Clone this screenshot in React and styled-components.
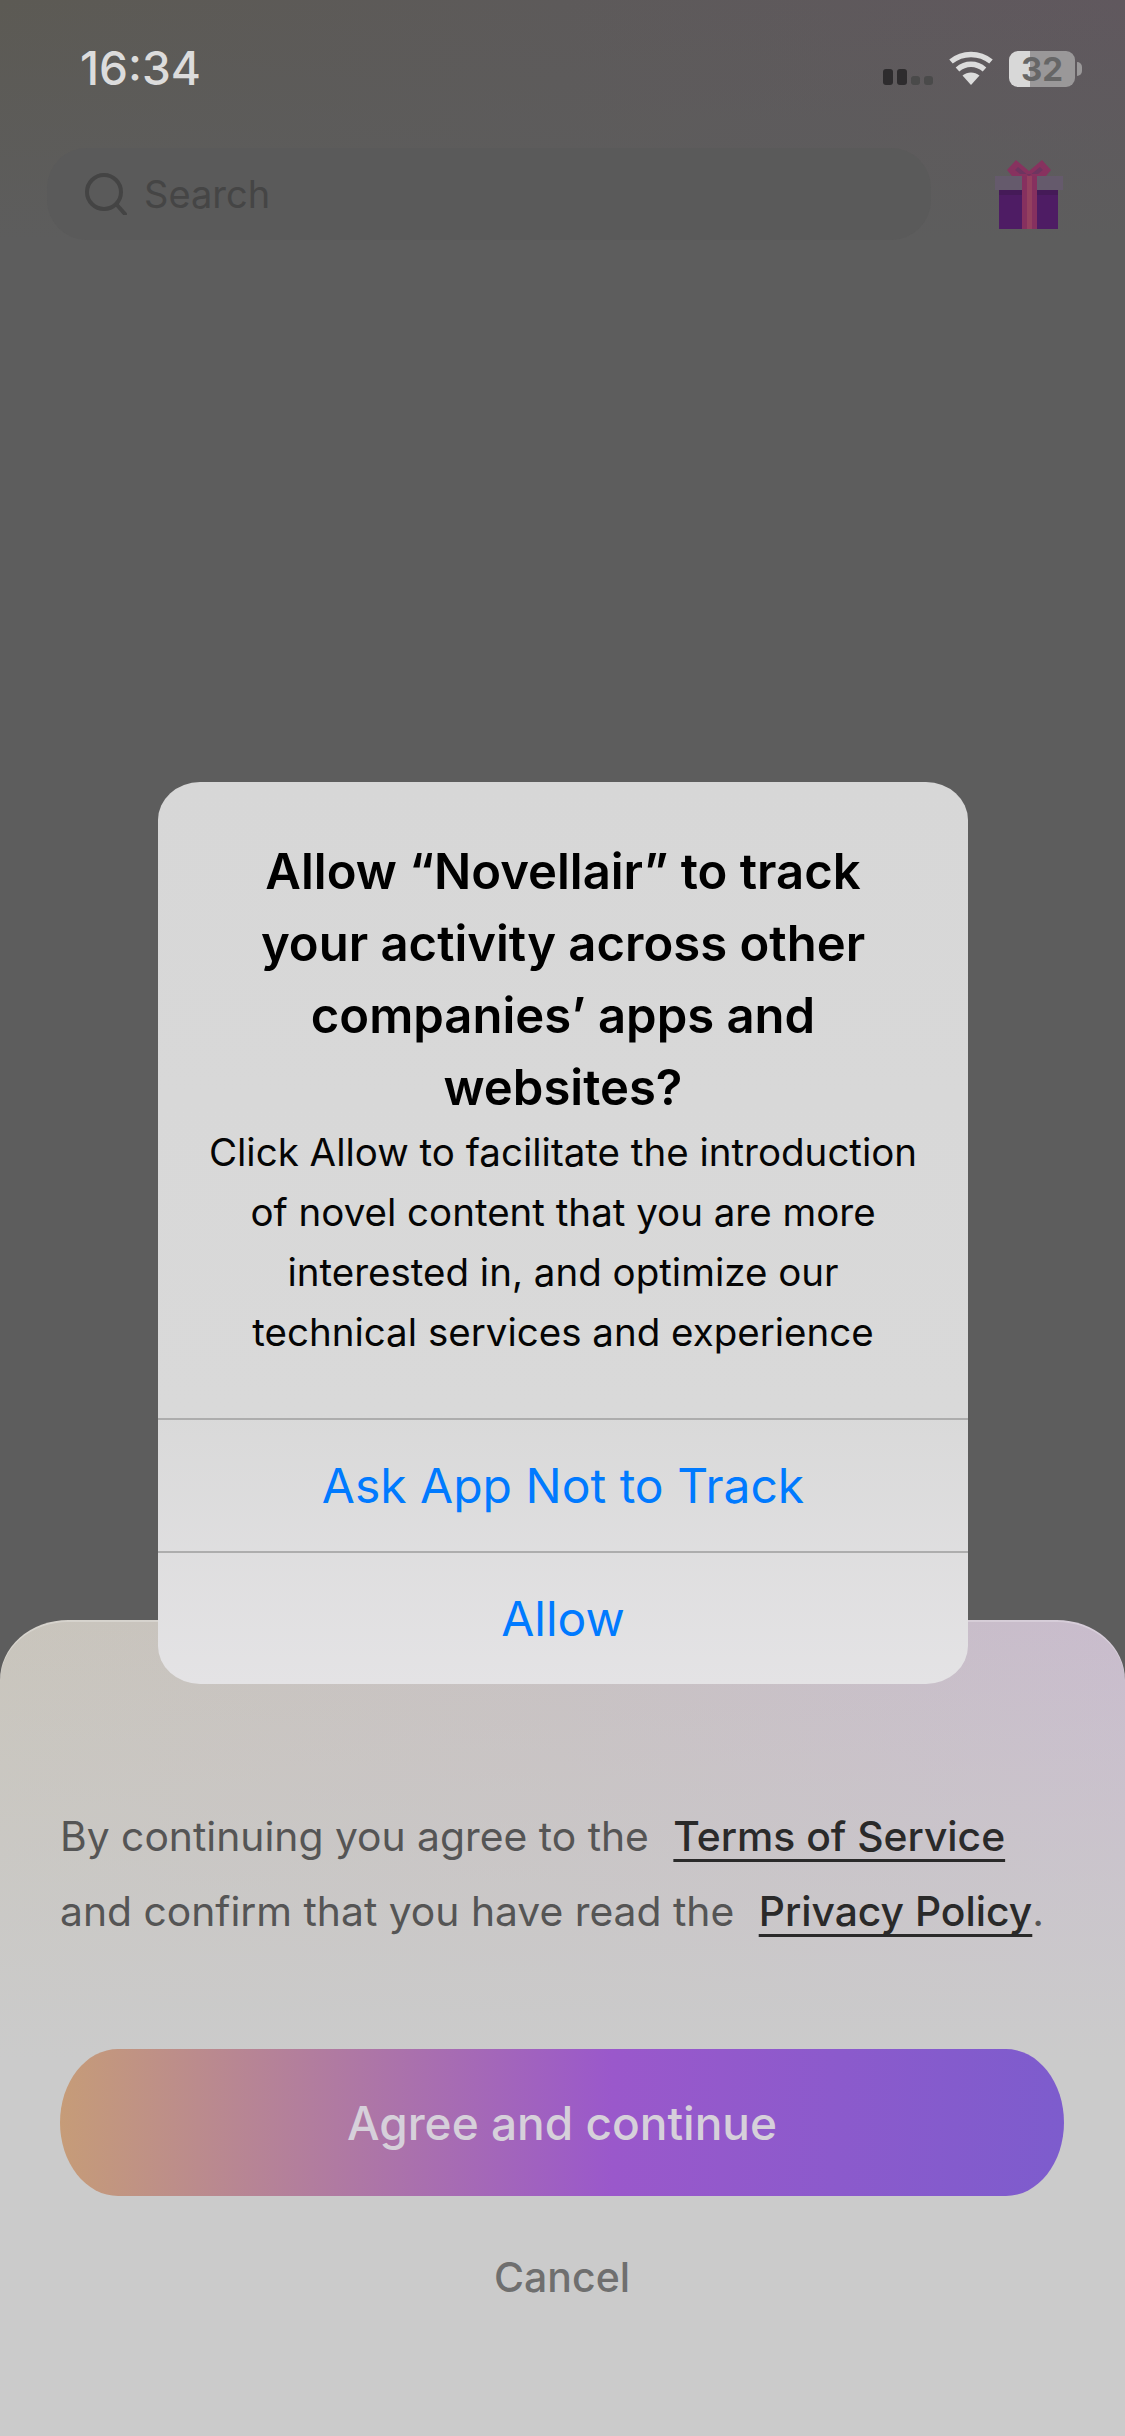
import styled, { createGlobalStyle } from "styled-components";

const GlobalStyle = createGlobalStyle`
  html, body {
    margin: 0;
    padding: 0;
    background: #5d5d5d;
  }
  * {
    box-sizing: border-box;
  }
`;

const Page = styled.div`
  position: relative;
  width: 1125px;
  height: 2436px;
  display: flex;
  flex-direction: column;
  overflow: hidden;
  font-family: Inter, "Liberation Sans", sans-serif;
  background: linear-gradient(180deg, transparent 0, #5d5d5d 240px),
    linear-gradient(90deg, #5c5a54 0%, #5d5a5a 50%, #60585e 100%);
  background-color: #5d5d5d;
`;

const StatusBar = styled.div`
  height: 148px;
  padding: 42px 43px 0 80px;
  display: flex;
  justify-content: space-between;
  align-items: flex-start;
`;

const Time = styled.div`
  font-size: 46px;
  line-height: 52px;
  font-weight: 500;
  color: #dcdcdc;
`;

const StatusIcons = styled.div`
  display: flex;
  align-items: flex-start;
  padding-top: 9px;
  padding-right: 7px;
`;

const Signal = styled.div`
  display: flex;
  align-items: flex-end;
  gap: 4px;
  height: 34px;
  margin-right: 15px;
`;

const SignalBar = styled.span`
  width: ${(p) => (p.$on ? 10 : 9)}px;
  height: ${(p) => (p.$on ? 16 : 9)}px;
  border-radius: 3px;
  background: ${(p) => (p.$on ? "#2e2c2e" : "#4a4a4a")};
`;

const WifiIcon = styled.svg`
  width: 46px;
  height: 34px;
  margin-right: 15px;
`;

const Battery = styled.div`
  position: relative;
  width: 66px;
  height: 36px;
  border-radius: 9px;
  background: linear-gradient(90deg, #d8d8d8 0 21px, #9a9899 21px);
  color: #666;
  font-size: 33px;
  line-height: 36px;
  font-weight: 700;
  text-align: center;

  &::after {
    content: "";
    position: absolute;
    right: -7px;
    top: 11px;
    width: 5px;
    height: 14px;
    border-radius: 0 5px 5px 0;
    background: #9a9899;
  }
`;

const SearchRow = styled.div`
  padding: 0 62px 0 47px;
  display: flex;
  align-items: center;
  justify-content: space-between;
`;

const SearchField = styled.div`
  width: 884px;
  height: 92px;
  padding-left: 38px;
  border-radius: 40px;
  background: #5a5a5a;
  display: flex;
  align-items: center;
  gap: 17px;
  font-size: 38px;
  color: #454545;
`;

const Sheet = styled.div`
  margin-top: auto;
  height: 816px;
  padding: 179px 60px 0;
  border-radius: 68px 68px 0 0 / 60px 60px 0 0;
  background: linear-gradient(180deg, transparent 0, #cbcbcb 440px),
    linear-gradient(90deg, #c9c5bc 0%, #c8c1c2 50%, #c9bccd 100%);
  background-color: #cbcbcb;
  box-shadow: inset 0 2px 0 rgba(255, 255, 255, 0.25);
`;

const Legal = styled.p`
  margin: 0;
  font-size: 40.8px;
  line-height: 75px;
  color: #555;
  white-space: nowrap;
`;

const LegalLink = styled.a`
  margin-left: 13px;
  color: #2a2a2a;
  font-weight: 500;
  text-decoration: underline;
  text-decoration-thickness: 3px;
  text-underline-offset: 8px;
`;

const AgreeButton = styled.button`
  display: block;
  width: 1004px;
  height: 147px;
  margin-top: 100px;
  border: none;
  border-radius: 58px / 73.5px;
  background: linear-gradient(90deg, #c69c78 0%, #9a58cb 55%, #7d5ccd 100%);
  color: #d6d0da;
  font: 500 46px Inter, "Liberation Sans", sans-serif;
`;

const CancelButton = styled.button`
  display: block;
  width: 1004px;
  height: 80px;
  margin-top: 41px;
  border: none;
  background: none;
  color: #6f6f6f;
  font: 500 41px Inter, "Liberation Sans", sans-serif;
`;

const Dialog = styled.div`
  position: absolute;
  top: 782px;
  left: 158px;
  width: 810px;
  height: 902px;
  border-radius: 42px / 38px;
  overflow: hidden;
  background: linear-gradient(180deg, #d7d7d7 0%, #d9d9d9 70%, #e4e3e5 100%);
  text-align: center;
`;

const DialogBody = styled.div`
  height: 636px;
  padding: 54px 45px 0;
`;

const DialogTitle = styled.h2`
  margin: 0 auto;
  max-width: 640px;
  font-size: 49px;
  line-height: 72px;
  font-weight: 600;
  color: #000;
`;

const DialogText = styled.p`
  margin: -2px 0 0;
  font-size: 38.5px;
  line-height: 60px;
  color: #050505;
`;

const DialogAction = styled.button`
  display: block;
  width: 100%;
  height: ${(p) => p.$height}px;
  border: none;
  border-top: 2px solid #adadad;
  background: none;
  color: #007aff;
  font: 400 48px Inter, "Liberation Sans", sans-serif;
`;

function Wifi() {
  return (
    <WifiIcon viewBox="0 0 46 34">
      <path d="M23 34 14.5 24.5C19.5 20.5 26.5 20.5 31.5 24.5Z" fill="#dcdcdc" />
      <path
        d="M9.5 18.5C17.5 11.5 28.5 11.5 36.5 18.5"
        fill="none"
        stroke="#dcdcdc"
        strokeWidth="5.5"
      />
      <path
        d="M3 10.5C14.5 1 31.5 1 43 10.5"
        fill="none"
        stroke="#dcdcdc"
        strokeWidth="5.5"
      />
    </WifiIcon>
  );
}

function SearchGlass() {
  return (
    <svg width="42" height="42" viewBox="0 0 42 42" fill="none">
      <circle cx="19" cy="19" r="17" stroke="#444" strokeWidth="4" />
      <path d="M32 32 40 41" stroke="#444" strokeWidth="4" strokeLinecap="round" />
    </svg>
  );
}

function Gift() {
  return (
    <svg width="68" height="69" viewBox="0 0 68 69">
      <path
        d="M34 16H17L12 10 21 0 34 11 47 0 56 10 51 16Z"
        fill="#87325f"
      />
      <path d="M34 16 23 7 20 10 25 14H43L48 10 45 7Z" fill="#6d3560" />
      <rect x="0" y="16" width="68" height="14" fill="#655a6c" />
      <rect x="4" y="30" width="59" height="39" fill="#4e1c64" />
      <rect x="4" y="30" width="59" height="5" fill="#451a58" />
      <rect x="27" y="16" width="15" height="53" fill="#86305f" />
      <rect x="32" y="16" width="5" height="53" fill="#94405f" />
    </svg>
  );
}

export default function App() {
  return (
    <>
      <GlobalStyle />
      <Page>
        <StatusBar>
          <Time>16:34</Time>
          <StatusIcons>
            <Signal>
              <SignalBar $on />
              <SignalBar $on />
              <SignalBar />
              <SignalBar />
            </Signal>
            <Wifi />
            <Battery>32</Battery>
          </StatusIcons>
        </StatusBar>
        <SearchRow>
          <SearchField>
            <SearchGlass />
            Search
          </SearchField>
          <Gift />
        </SearchRow>
        <Sheet>
          <Legal>
            By continuing you agree to the <LegalLink>Terms of Service</LegalLink>
            <br />
            and confirm that you have read the <LegalLink>Privacy Policy</LegalLink>.
          </Legal>
          <AgreeButton>Agree and continue</AgreeButton>
          <CancelButton>Cancel</CancelButton>
        </Sheet>
        <Dialog>
          <DialogBody>
            <DialogTitle>
              Allow “Novellair” to track your activity across other companies’ apps and
              websites?
            </DialogTitle>
            <DialogText>
              Click Allow to facilitate the introduction of novel content that you are
              more interested in, and optimize our technical services and experience
            </DialogText>
          </DialogBody>
          <DialogAction $height={133}>Ask App Not to Track</DialogAction>
          <DialogAction $height={133}>Allow</DialogAction>
        </Dialog>
      </Page>
    </>
  );
}
